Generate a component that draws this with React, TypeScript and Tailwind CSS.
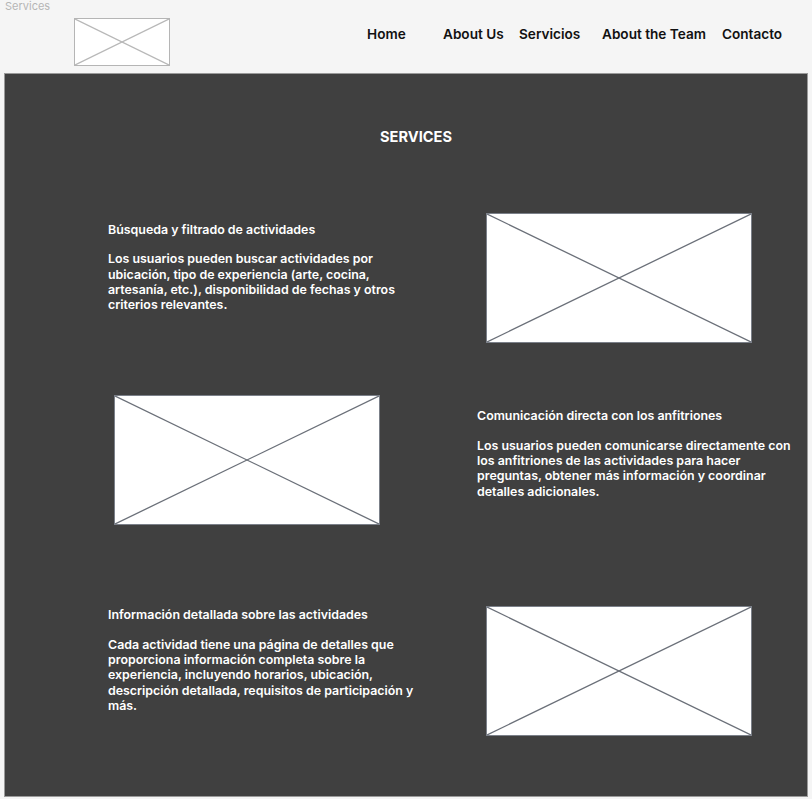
import React from 'react';

const navItems: { label: string; width: string }[] = [
  { label: 'Home', width: 'w-[76px]' },
  { label: 'About Us', width: 'w-[76px]' },
  { label: 'Servicios', width: 'w-[83px]' },
  { label: 'About the Team', width: 'w-[120px]' },
  { label: 'Contacto', width: 'w-auto' },
];

function Placeholder({ className, stroke }: { className: string; stroke: string }) {
  return (
    <div className={`bg-white ${className}`}>
      <svg className="w-full h-full block" viewBox="0 0 100 100" preserveAspectRatio="none">
        <line x1="0" y1="0" x2="100" y2="100" stroke={stroke} strokeWidth="1.3" vectorEffect="non-scaling-stroke" />
        <line x1="100" y1="0" x2="0" y2="100" stroke={stroke} strokeWidth="1.3" vectorEffect="non-scaling-stroke" />
      </svg>
    </div>
  );
}

function ServiceText({ title, body, className }: { title: string; body: string; className: string }) {
  return (
    <div className={`text-white font-semibold text-[12.4px] leading-[15.3px] ${className}`}>
      <div>{title}</div>
      <div className="mt-[14.6px]">{body}</div>
    </div>
  );
}

function ServiceImage({ className }: { className: string }) {
  return <Placeholder className={`w-[266px] h-[130px] border-[1.5px] border-[#7b8089] ${className}`} stroke="#6b7079" />;
}

export default function App() {
  return (
    <div className="w-[812px] h-[799px] bg-[#f5f5f5] relative font-['Inter',sans-serif] overflow-hidden">
      <div className="absolute top-0 left-[5px] text-[11px] text-[#b5b5b5] leading-[12px]">Services</div>

      <header className="h-[73px] flex items-start">
        <Placeholder className="ml-[74px] mt-[18px] w-[96px] h-[48px] border border-[#b5b5b5]" stroke="#b8b8b8" />
        <nav className="ml-[197px] mt-[25px] flex text-[13.6px] font-semibold text-[#111] leading-[18px]">
          {navItems.map((item) => (
            <a key={item.label} className={item.width}>
              {item.label}
            </a>
          ))}
        </nav>
      </header>

      <main className="ml-[4px] w-[804px] h-[724px] bg-[#404040] border border-[#9a9a9a]">
        <h1 className="mt-[54px] text-center text-white font-bold text-[14.6px] leading-[18px] pl-[20px]">SERVICES</h1>

        <section className="mt-[67px] grid grid-cols-[402px_400px]">
          <ServiceText
            className="pl-[103px] pt-[8.5px] w-[425px]"
            title="Búsqueda y filtrado de actividades"
            body="Los usuarios pueden buscar actividades por ubicación, tipo de experiencia (arte, cocina, artesanía, etc.), disponibilidad de fechas y otros criterios relevantes."
          />
          <ServiceImage className="ml-[79px]" />
        </section>

        <section className="mt-[52px] grid grid-cols-[402px_400px]">
          <ServiceImage className="ml-[109px]" />
          <ServiceText
            className="pl-[70px] pt-[13px]"
            title="Comunicación directa con los anfitriones"
            body="Los usuarios pueden comunicarse directamente con los anfitriones de las actividades para hacer preguntas, obtener más información y coordinar detalles adicionales."
          />
        </section>

        <section className="mt-[81px] grid grid-cols-[402px_400px]">
          <ServiceText
            className="pl-[103px] pt-[1px] w-[420px]"
            title="Información detallada sobre las actividades"
            body="Cada actividad tiene una página de detalles que proporciona información completa sobre la experiencia, incluyendo horarios, ubicación, descripción detallada, requisitos de participación y más."
          />
          <ServiceImage className="ml-[79px]" />
        </section>
      </main>
    </div>
  );
}
